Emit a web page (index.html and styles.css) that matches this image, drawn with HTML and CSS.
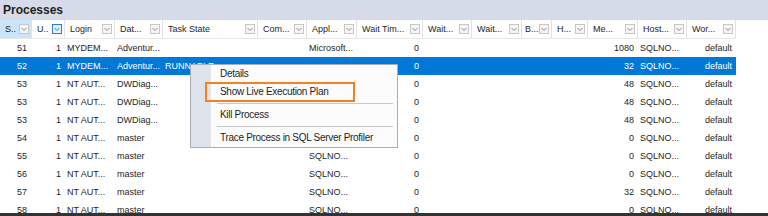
FILE: index.html
```html
<!DOCTYPE html>
<html>
<head>
<meta charset="utf-8">
<link rel="stylesheet" href="styles.css">
</head>
<body>
<div class="panel">
  <div class="title">Processes</div>
  <div class="grid">
    <div class="row head">
      <div class="h sorted"><span>S..</span><svg class="dd" viewBox="0 0 10 10"><rect x="0.5" y="0.5" width="9" height="9"/><path d="M2.5 4 L5 6.5 L7.5 4"/></svg></div>
      <div class="h"><span>U..</span><svg class="dd hot" viewBox="0 0 10 10"><rect x="0.5" y="0.5" width="9" height="9"/><path d="M2.5 4 L5 6.5 L7.5 4"/></svg></div>
      <div class="h"><span>Login</span><svg class="dd" viewBox="0 0 10 10"><rect x="0.5" y="0.5" width="9" height="9"/><path d="M2.5 4 L5 6.5 L7.5 4"/></svg></div>
      <div class="h"><span>Dat...</span><svg class="dd" viewBox="0 0 10 10"><rect x="0.5" y="0.5" width="9" height="9"/><path d="M2.5 4 L5 6.5 L7.5 4"/></svg></div>
      <div class="h"><span>Task State</span><svg class="dd" viewBox="0 0 10 10"><rect x="0.5" y="0.5" width="9" height="9"/><path d="M2.5 4 L5 6.5 L7.5 4"/></svg></div>
      <div class="h"><span>Com...</span><svg class="dd" viewBox="0 0 10 10"><rect x="0.5" y="0.5" width="9" height="9"/><path d="M2.5 4 L5 6.5 L7.5 4"/></svg></div>
      <div class="h"><span>Appl...</span><svg class="dd" viewBox="0 0 10 10"><rect x="0.5" y="0.5" width="9" height="9"/><path d="M2.5 4 L5 6.5 L7.5 4"/></svg></div>
      <div class="h"><span>Wait Tim...</span><svg class="dd" viewBox="0 0 10 10"><rect x="0.5" y="0.5" width="9" height="9"/><path d="M2.5 4 L5 6.5 L7.5 4"/></svg></div>
      <div class="h"><span>Wait...</span><svg class="dd" viewBox="0 0 10 10"><rect x="0.5" y="0.5" width="9" height="9"/><path d="M2.5 4 L5 6.5 L7.5 4"/></svg></div>
      <div class="h"><span>Wait...</span><svg class="dd" viewBox="0 0 10 10"><rect x="0.5" y="0.5" width="9" height="9"/><path d="M2.5 4 L5 6.5 L7.5 4"/></svg></div>
      <div class="h tight"><span>B...</span><svg class="dd" viewBox="0 0 10 10"><rect x="0.5" y="0.5" width="9" height="9"/><path d="M2.5 4 L5 6.5 L7.5 4"/></svg></div>
      <div class="h"><span>H...</span><svg class="dd" viewBox="0 0 10 10"><rect x="0.5" y="0.5" width="9" height="9"/><path d="M2.5 4 L5 6.5 L7.5 4"/></svg></div>
      <div class="h"><span>Me...</span><svg class="dd" viewBox="0 0 10 10"><rect x="0.5" y="0.5" width="9" height="9"/><path d="M2.5 4 L5 6.5 L7.5 4"/></svg></div>
      <div class="h"><span>Host...</span><svg class="dd" viewBox="0 0 10 10"><rect x="0.5" y="0.5" width="9" height="9"/><path d="M2.5 4 L5 6.5 L7.5 4"/></svg></div>
      <div class="h"><span>Wor...</span><svg class="dd" viewBox="0 0 10 10"><rect x="0.5" y="0.5" width="9" height="9"/><path d="M2.5 4 L5 6.5 L7.5 4"/></svg></div>
    </div>

    <div class="row"><div class="c n1">51</div><div class="c n">1</div><div class="c">MYDEM...</div><div class="c">Adventur...</div><div class="c"></div><div class="c"></div><div class="c">Microsoft...</div><div class="c n">0</div><div class="c"></div><div class="c"></div><div class="c"></div><div class="c"></div><div class="c n">1080</div><div class="c">SQLNO...</div><div class="c n">default</div></div>
    <div class="row sel"><div class="c n1">52</div><div class="c n">1</div><div class="c">MYDEM...</div><div class="c">Adventur...</div><div class="c">RUNNABLE</div><div class="c"></div><div class="c"></div><div class="c n">0</div><div class="c"></div><div class="c"></div><div class="c"></div><div class="c"></div><div class="c n">32</div><div class="c">SQLNO...</div><div class="c n">default</div></div>
    <div class="row"><div class="c n1">53</div><div class="c n">1</div><div class="c">NT AUT...</div><div class="c">DWDiag...</div><div class="c"></div><div class="c"></div><div class="c"></div><div class="c n">0</div><div class="c"></div><div class="c"></div><div class="c"></div><div class="c"></div><div class="c n">48</div><div class="c">SQLNO...</div><div class="c n">default</div></div>
    <div class="row"><div class="c n1">53</div><div class="c n">1</div><div class="c">NT AUT...</div><div class="c">DWDiag...</div><div class="c"></div><div class="c"></div><div class="c"></div><div class="c n">0</div><div class="c"></div><div class="c"></div><div class="c"></div><div class="c"></div><div class="c n">48</div><div class="c">SQLNO...</div><div class="c n">default</div></div>
    <div class="row"><div class="c n1">53</div><div class="c n">1</div><div class="c">NT AUT...</div><div class="c">DWDiag...</div><div class="c"></div><div class="c"></div><div class="c"></div><div class="c n">0</div><div class="c"></div><div class="c"></div><div class="c"></div><div class="c"></div><div class="c n">48</div><div class="c">SQLNO...</div><div class="c n">default</div></div>
    <div class="row"><div class="c n1">54</div><div class="c n">1</div><div class="c">NT AUT...</div><div class="c">master</div><div class="c"></div><div class="c"></div><div class="c"></div><div class="c n">0</div><div class="c"></div><div class="c"></div><div class="c"></div><div class="c"></div><div class="c n">0</div><div class="c">SQLNO...</div><div class="c n">default</div></div>
    <div class="row"><div class="c n1">55</div><div class="c n">1</div><div class="c">NT AUT...</div><div class="c">master</div><div class="c"></div><div class="c"></div><div class="c">SQLNO...</div><div class="c n">0</div><div class="c"></div><div class="c"></div><div class="c"></div><div class="c"></div><div class="c n">0</div><div class="c">SQLNO...</div><div class="c n">default</div></div>
    <div class="row"><div class="c n1">56</div><div class="c n">1</div><div class="c">NT AUT...</div><div class="c">master</div><div class="c"></div><div class="c"></div><div class="c">SQLNO...</div><div class="c n">0</div><div class="c"></div><div class="c"></div><div class="c"></div><div class="c"></div><div class="c n">0</div><div class="c">SQLNO...</div><div class="c n">default</div></div>
    <div class="row"><div class="c n1">57</div><div class="c n">1</div><div class="c">NT AUT...</div><div class="c">master</div><div class="c"></div><div class="c"></div><div class="c">SQLNO...</div><div class="c n">0</div><div class="c"></div><div class="c"></div><div class="c"></div><div class="c"></div><div class="c n">32</div><div class="c">SQLNO...</div><div class="c n">default</div></div>
    <div class="row"><div class="c n1">58</div><div class="c n">1</div><div class="c">NT AUT...</div><div class="c">master</div><div class="c"></div><div class="c"></div><div class="c">SQLNO...</div><div class="c n">0</div><div class="c"></div><div class="c"></div><div class="c"></div><div class="c"></div><div class="c n">0</div><div class="c">SQLNO...</div><div class="c n">default</div></div>
  </div>

  <div class="menu">
    <div class="item">Details</div>
    <div class="item">Show Live Execution Plan</div>
    <div class="sep"></div>
    <div class="item">Kill Process</div>
    <div class="sep"></div>
    <div class="item">Trace Process in SQL Server Profiler</div>
  </div>
  <div class="highlight"></div>
</div>
</body>
</html>
```

FILE: styles.css
```css
* { box-sizing: border-box; }
html, body {
  margin: 0;
  padding: 0;
  width: 768px;
  height: 216px;
  overflow: hidden;
  background: #ffffff;
}
.panel {
  position: relative;
  width: 768px;
  height: 216px;
  overflow: hidden;
  border-bottom: 3px solid #333333;
  font-family: "Liberation Sans", Arial, sans-serif;
  color: #1e1e1e;
}
.title {
  height: 20px;
  line-height: 21px;
  background: #d6dbe9;
  font-weight: bold;
  font-size: 12px;
  padding-left: 3px;
  color: #1e1e1e;
}
.grid {
  display: flex;
  flex-direction: column;
  font-size: 9px;
}
.row {
  display: grid;
  grid-template-columns: 32px 33px 50px 48px 95px 49px 50px 66px 49px 50px 30px 36px 50px 49px 49px;
  height: 18px;
  width: 736px;
  align-items: center;
  white-space: nowrap;
}
.row.head {
  height: 19px;
  background: #ffffff;
  border-bottom: 1px solid #e8e8e8;
}
.h {
  height: 100%;
  display: flex;
  align-items: center;
  justify-content: space-between;
  padding: 0 2px 0 5px;
  border-right: 1px solid #e2e2e2;
  overflow: hidden;
}
.h span { overflow: hidden; }
.h.tight { padding-left: 3px; }
.h.tight span { flex: none; overflow: visible; }
.h.sorted { background: #cce4f7; }
.dd {
  flex: none;
  width: 10px;
  height: 10px;
}
.dd rect { fill: #f6f6f6; stroke: #c6c6c6; }
.dd path { fill: none; stroke: #8a8a8a; stroke-width: 1; }
.dd.hot rect { fill: #e5f1fb; stroke: #2b7cd3; }
.dd.hot path { stroke: #2b7cd3; }
.c {
  overflow: hidden;
  padding-left: 2px;
  line-height: 18px;
}
.c.n { text-align: right; padding-right: 4px; padding-left: 0; }
.c.n1 { text-align: right; padding-right: 5px; padding-left: 0; }
.row.sel { background: #0078d7; color: #ffffff; }

.menu {
  position: absolute;
  left: 190px;
  top: 64px;
  width: 208px;
  border: 1px solid #a8adb8;
  background: #fcfcfc linear-gradient(to right, #dfe3ec 0, #dfe3ec 20px, transparent 20px);
  font-size: 10px;
  letter-spacing: -0.3px;
  color: #1e1e1e;
  display: flex;
  flex-direction: column;
}
.item {
  height: 18px;
  line-height: 18px;
  padding-left: 29px;
  white-space: nowrap;
}
.sep {
  height: 5px;
  margin: 0 4px 0 26px;
  position: relative;
}
.sep::after {
  content: "";
  position: absolute;
  left: 0;
  right: 0;
  top: 2px;
  height: 1px;
  background: #c9c9c9;
}
.highlight {
  position: absolute;
  left: 205px;
  top: 82px;
  width: 150px;
  height: 20px;
  border: 2px solid #f5821f;
}
```
